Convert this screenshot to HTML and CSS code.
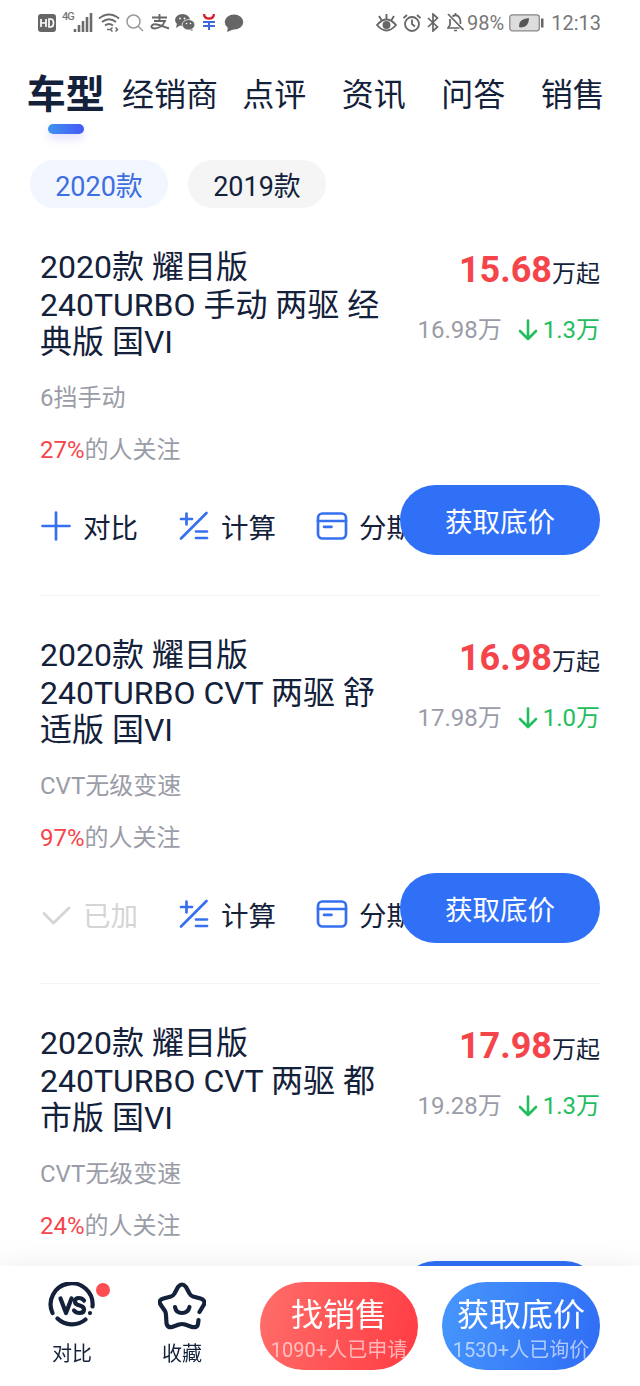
FILE: index.html
```html
<!DOCTYPE html>
<html lang="zh-CN">

<head>
    <meta charset="UTF-8">
    <meta name="viewport" content="width=device-width, initial-scale=1.0">
    <title>车型</title>
    <link rel="stylesheet" href="styles.css">
</head>

<body>
    <!-- iconos compartidos -->
    <svg class="sprite" aria-hidden="true">
        <symbol id="i-plus" viewBox="0 0 30 30">
            <path d="M15 1.5v27M1.5 15h27" />
        </symbol>
        <symbol id="i-check" viewBox="0 0 30 30">
            <path d="M3 14.5l9.500 9.500L28 9" />
        </symbol>
        <symbol id="i-calc" viewBox="0 0 30 30">
            <path d="M27.500 2L2 27.500M7.500 2.500v11M2 8h11M17 20.500h11M17 27h11" />
        </symbol>
        <symbol id="i-card" viewBox="0 0 32 30">
            <rect x="2" y="2.500" width="28" height="25" rx="4.500" />
            <path d="M2 10h28M8 15.800h7.500" />
        </symbol>
        <symbol id="i-down" viewBox="0 0 20 22">
            <path d="M10 1.500v18M2 12l8 8 8-8" />
        </symbol>
    </svg>

    <header class="status">
        <div class="status-left">
            <svg width="19" height="18" viewBox="0 0 19 18">
                <rect width="18" height="18" rx="3" fill="#666" />
                <path d="M3 5v8M3 9h5M8 5v8M11 5v8h1.500q3 0 3-4t-3-4z" fill="none" stroke="#fff" stroke-width="1.700" />
            </svg>
            <span class="net">4G</span>
            <svg class="signal" width="20" height="19" viewBox="0 0 20 19">
                <path d="M2 16v3M6 12v7M10 8v11M14 4v15M18 0v19" stroke="#6b6b6b" stroke-width="2.600" />
            </svg>
            <svg class="wifi" width="22" height="19" viewBox="0 0 22 19" fill="none" stroke="#6b6b6b" stroke-width="2">
                <path d="M1 5.500Q11-2.500 21 5.500M4 9Q11 3.500 18 9M7 12.500Q11 9.500 15 12.500" />
                <path d="M9 16.500h4M14.500 14.500l-2 2 2 2M17.500 14.500l2 2-2 2" stroke-width="1.500" />
            </svg>
            <svg class="search" width="18" height="18" viewBox="0 0 18 18" fill="none" stroke="#999" stroke-width="1.500">
                <circle cx="7.500" cy="7.500" r="6.500" />
                <path d="M12 12l5 5" />
            </svg>
            <svg class="pay" width="20" height="17" viewBox="0 0 20 17" fill="none" stroke="#666" stroke-width="1.900">
                <path d="M2 3.500h15M9.500 0v7M4 7h11Q12 14 5 14.500Q1 14.500 1.500 12Q3 9 9 11T19 14.500" />
            </svg>
            <svg class="wechat" width="20" height="17" viewBox="0 0 20 17" fill="#666">
                <ellipse cx="7.500" cy="6" rx="7.500" ry="6" />
                <path d="M2 9.500L1 14l4-2.500zM17 13l.5 4-4-1.500z" />
                <ellipse cx="13.500" cy="10.800" rx="6.300" ry="5.200" stroke="#fff" stroke-width=".7" />
                <g fill="#fff"><circle cx="5" cy="4.500" r=".9" /><circle cx="9.500" cy="4.500" r=".9" /><circle cx="11.500" cy="9.500" r=".8" /><circle cx="15.500" cy="9.500" r=".8" /></g>
            </svg>
            <svg class="yuan" width="14" height="17" viewBox="0 0 14 17" fill="none" stroke-width="2.300">
                <path d="M2 0Q2.500 4.500 7 4.500T12 0" stroke="#d5202c" />
                <path d="M1 8h12M1 12h12M7 7v9" stroke="#3d66df" stroke-width="2" />
            </svg>
            <svg width="20" height="18" viewBox="0 0 20 18" fill="#666">
                <ellipse cx="10" cy="8" rx="9.300" ry="7.600" />
                <path d="M4 12l-.8 6 7-3z" />
            </svg>
        </div>
        <div class="status-right">
            <svg class="eye" width="21" height="18" viewBox="0 0 21 18" fill="none" stroke="#666" stroke-width="1.900">
                <path d="M1 11Q10.500 0 20 11Q10.500 22 1 11zM10.500 5V0M5.500 6L3 2M15.500 6L18 2" />
                <circle cx="10.500" cy="11" r="3" fill="#666" />
            </svg>
            <svg class="alarm" width="18" height="18" viewBox="0 0 18 18" fill="none" stroke="#666" stroke-width="1.800">
                <circle cx="9" cy="10" r="7" />
                <path d="M9 5.500V10l3 2.500M.5 4L4 1M17.500 4L14 1" />
            </svg>
            <svg class="bt" width="12" height="19" viewBox="0 0 12 19" fill="none" stroke="#666" stroke-width="1.700">
                <path d="M1 5l9.500 9L6 18V1l4.500 4L1 14" />
            </svg>
            <svg class="bell" width="17" height="19" viewBox="0 0 17 19" fill="none" stroke="#666" stroke-width="1.700">
                <path d="M1 1l15.500 16M5.500 3.500Q8.500 1 11.500 3.500Q13.500 5 13.500 11M3 6V12L1 15h11.500M7 17.500h3M8.500 0v2" />
            </svg>
            <span>98%</span>
            <svg class="battery" width="35" height="18" viewBox="0 0 35 18">
                <rect x=".8" y=".8" width="29.500" height="16" rx="2.500" fill="#ddd" stroke="#888" stroke-width="1.300" />
                <rect x="32" y="4.500" width="2.500" height="9" fill="#666" />
                <path d="M10 13Q9 5 20 4Q20 13 12 13.500z" fill="#555" />
            </svg>
            <span>12:13</span>
        </div>
    </header>

    <nav class="tabs">
        <a class="tab active">车型</a>
        <a class="tab wide">经销商</a>
        <a class="tab">点评</a>
        <a class="tab">资讯</a>
        <a class="tab">问答</a>
        <a class="tab">销售</a>
    </nav>

    <div class="years">
        <button class="year selected">2020款</button>
        <button class="year">2019款</button>
    </div>

    <main class="lista">
        <article class="item">
            <div class="top">
                <h2>2020款 耀目版 240TURBO 手动 两驱 经典版 国VI</h2>
                <div class="prices">
                    <p class="price"><b>15.68</b>万起</p>
                    <p class="guide">16.98万 <span class="drop"><svg><use href="#i-down" /></svg>1.3万</span></p>
                </div>
            </div>
            <p class="gear">6挡手动</p>
            <p class="follow"><em>27%</em>的人关注</p>
            <div class="actions">
                <div class="tools">
                    <span class="tool"><svg><use href="#i-plus" /></svg>对比</span>
                    <span class="tool"><svg><use href="#i-calc" /></svg>计算</span>
                    <span class="tool"><svg><use href="#i-card" /></svg>分期</span>
                </div>
                <button class="ask">获取底价</button>
            </div>
        </article>

        <article class="item">
            <div class="top">
                <h2>2020款 耀目版 240TURBO CVT 两驱 舒适版 国VI</h2>
                <div class="prices">
                    <p class="price"><b>16.98</b>万起</p>
                    <p class="guide">17.98万 <span class="drop"><svg><use href="#i-down" /></svg>1.0万</span></p>
                </div>
            </div>
            <p class="gear">CVT无级变速</p>
            <p class="follow"><em>97%</em>的人关注</p>
            <div class="actions">
                <div class="tools">
                    <span class="tool added"><svg><use href="#i-check" /></svg>已加</span>
                    <span class="tool"><svg><use href="#i-calc" /></svg>计算</span>
                    <span class="tool"><svg><use href="#i-card" /></svg>分期</span>
                </div>
                <button class="ask">获取底价</button>
            </div>
        </article>

        <article class="item">
            <div class="top">
                <h2>2020款 耀目版 240TURBO CVT 两驱 都市版 国VI</h2>
                <div class="prices">
                    <p class="price"><b>17.98</b>万起</p>
                    <p class="guide">19.28万 <span class="drop"><svg><use href="#i-down" /></svg>1.3万</span></p>
                </div>
            </div>
            <p class="gear">CVT无级变速</p>
            <p class="follow"><em>24%</em>的人关注</p>
            <div class="actions">
                <div class="tools"></div>
                <button class="ask"></button>
            </div>
        </article>
    </main>

    <footer class="bottom">
        <a class="shortcut">
            <svg width="48" height="48" viewBox="0 0 48 48">
                <path d="M4.500 31A21 21 0 1 1 44.500 24.500M9.500 36.500A21 21 0 0 0 37.500 37.500M42 31v.1" />
                <path d="M12.500 16.500L18 31L23.500 16.500M36 18.500Q34 16 31 16Q27 16 27 19.500Q27 22.500 31 23.300Q36 24.500 36 27.500Q36 31 31.500 31Q28 31 26 28.500" />
            </svg>
            <span>对比</span>
            <i class="dot"></i>
        </a>
        <a class="shortcut">
            <svg width="48" height="48" viewBox="0 0 48 48">
                <path d="M41.500 30L46 22.500Q47.500 18 42.500 16.500L35 14.500Q33 14 31.500 11.500L28 5Q24 0 20 5L16.500 11.500Q15 14 13 14.500L5.500 16.500Q0 18 2.500 22.500L7 29Q8 31 8 33L8.500 41.500Q9.500 46 14 45L21 42.500Q24 41.500 27 42.500L34 45Q39.500 46 40 42L40.500 38" />
                <path d="M17 25Q18 31 24 31T31.500 25" />
            </svg>
            <span>收藏</span>
        </a>
        <button class="big red">找销售<small>1090+人已申请</small></button>
        <button class="big blue">获取底价<small>1530+人已询价</small></button>
    </footer>
</body>

</html>
```

FILE: styles.css
```css
* {
    box-sizing: border-box;
}

body {
    margin: 0;
    width: 640px;
    height: 1386px;
    overflow: hidden;
    background-color: #fff;
    color: #14213a;
    font-family: Roboto, 'Noto Sans CJK SC', sans-serif;
}

h2,
p {
    margin: 0;
    font-weight: 400;
}

button {
    border: none;
    padding: 0;
    font-family: inherit;
    color: inherit;
}

svg {
    flex: none;
}

.sprite {
    display: none;
}

/* barra de estado */
.status {
    display: flex;
    justify-content: space-between;
    height: 45px;
    padding: 0 39px 0 38px;
    color: #777;
    font-size: 20px;
}

.status-left,
.status-right {
    display: flex;
    align-items: center;
}

.net {
    font-size: 11px;
    font-weight: 500;
    line-height: 12px;
    margin: 0 0 11px 5px;
    width: 11px;
    letter-spacing: -1px;
}

.wifi {
    margin-left: 5px;
}

.search {
    margin-left: 6px;
}

.pay {
    margin-left: 6px;
}

.wechat {
    margin-left: 5px;
}

.yuan {
    margin: 0 8px 0 7px;
}

.alarm {
    margin-left: 6px;
}

.bt {
    margin-left: 6px;
}

.bell {
    margin: 0 3px 0 8px;
}

.battery {
    margin: 0 7px 0 5px;
}

/* pestañas */
.tabs {
    display: flex;
    height: 101px;
    padding-left: 16px;
}

.tab {
    display: flex;
    justify-content: center;
    width: 99.5px;
    height: 101px;
    font-size: 32px;
    line-height: 101px;
    white-space: nowrap;
}

.tab.wide {
    width: 109px;
}

.tab.active {
    flex-direction: column;
    justify-content: flex-start;
    align-items: center;
    font-size: 39px;
    font-weight: 700;
}

.tab.active::after {
    content: '';
    flex: none;
    width: 36px;
    height: 10px;
    margin-top: -22px;
    border-radius: 5px;
    background: linear-gradient(90deg, #3f93f0, #4659f5);
    box-shadow: 0 5px 8px rgba(110, 80, 245, 0.18);
}

.years {
    display: flex;
    gap: 20px;
    padding: 14px 30px 0;
}

.year {
    width: 138px;
    height: 48px;
    border-radius: 24px;
    background-color: #f5f5f5;
    font-size: 27px;
}

.year.selected {
    background-color: #f1f6ff;
    color: #3f6ee0;
}

/* lista de modelos */
.item {
    height: 388px;
    margin: 0 40px;
    padding-top: 41px;
    border-bottom: 1px solid #f3f3f3;
}

.top {
    display: flex;
    justify-content: space-between;
}

h2 {
    width: 345px;
    font-size: 32px;
    line-height: 37.5px;
}

.prices {
    text-align: right;
    white-space: nowrap;
}

.price {
    font-size: 24px;
    line-height: 42px;
}

.price b {
    color: #f5444a;
    font-size: 36px;
}

.guide {
    display: flex;
    justify-content: flex-end;
    align-items: center;
    margin-top: 19px;
    color: #9a9ca8;
    font-size: 24px;
    line-height: 32px;
}

.drop {
    display: flex;
    align-items: center;
    margin-left: 16px;
    color: #22bd5d;
}

.drop svg {
    width: 20px;
    height: 22px;
    margin-right: 5px;
    fill: none;
    stroke: #22bd5d;
    stroke-width: 2.6;
    stroke-linecap: round;
    stroke-linejoin: round;
}

.gear,
.follow {
    color: #9a9ca8;
    font-size: 24px;
    line-height: 32px;
}

.gear {
    margin-top: 20px;
}

.follow {
    margin-top: 20px;
}

.follow em {
    color: #f5444a;
    font-style: normal;
}

.actions {
    display: flex;
    margin-top: 19px;
}

.tools {
    display: flex;
    align-items: center;
    width: 360px;
    height: 82px;
    white-space: nowrap;
}

.tool {
    display: flex;
    flex: none;
    align-items: center;
    width: 138px;
    font-size: 27.5px;
}

.tool svg {
    width: 32px;
    height: 30px;
    margin-right: 11px;
    fill: none;
    stroke: #3670f0;
    stroke-width: 2.7;
    stroke-linecap: round;
}

.added {
    color: #d5d5d5;
}

.added svg {
    stroke: #d5d5d5;
}

.ask {
    position: relative;
    flex: none;
    width: 200px;
    height: 70px;
    border-radius: 35px;
    background-color: #3070f7;
    color: #fff;
    font-size: 27.5px;
}

/* barra inferior */
.bottom {
    position: fixed;
    left: 0;
    bottom: 0;
    display: flex;
    width: 640px;
    height: 120px;
    padding: 16px 40px 0 17px;
    background-color: #fff;
    box-shadow: 0 0 32px rgba(0, 0, 0, 0.08);
}

.shortcut {
    position: relative;
    display: flex;
    flex-direction: column;
    align-items: center;
    width: 110px;
    font-size: 20px;
}

.shortcut svg {
    margin-bottom: 9px;
    fill: none;
    stroke: #14213a;
    stroke-width: 4.2;
    stroke-linecap: round;
    stroke-linejoin: round;
}

.shortcut span {
    line-height: 30px;
}

.dot {
    position: absolute;
    top: 1px;
    right: 17px;
    width: 14px;
    height: 14px;
    border-radius: 50%;
    background-color: #fc4e50;
}

.big {
    display: flex;
    flex-direction: column;
    align-items: center;
    width: 158px;
    height: 88px;
    padding-top: 12px;
    border-radius: 44px;
    color: #fff;
    font-size: 32px;
    line-height: 42px;
    white-space: nowrap;
}

.big small {
    font-size: 20px;
    line-height: 28px;
    opacity: 0.6;
}

.red {
    margin-left: 23px;
    background: linear-gradient(105deg, #ff6e6a, #ff3b42);
}

.blue {
    margin-left: 24px;
    background: linear-gradient(105deg, #4797fc, #2f6cf5);
}
```
